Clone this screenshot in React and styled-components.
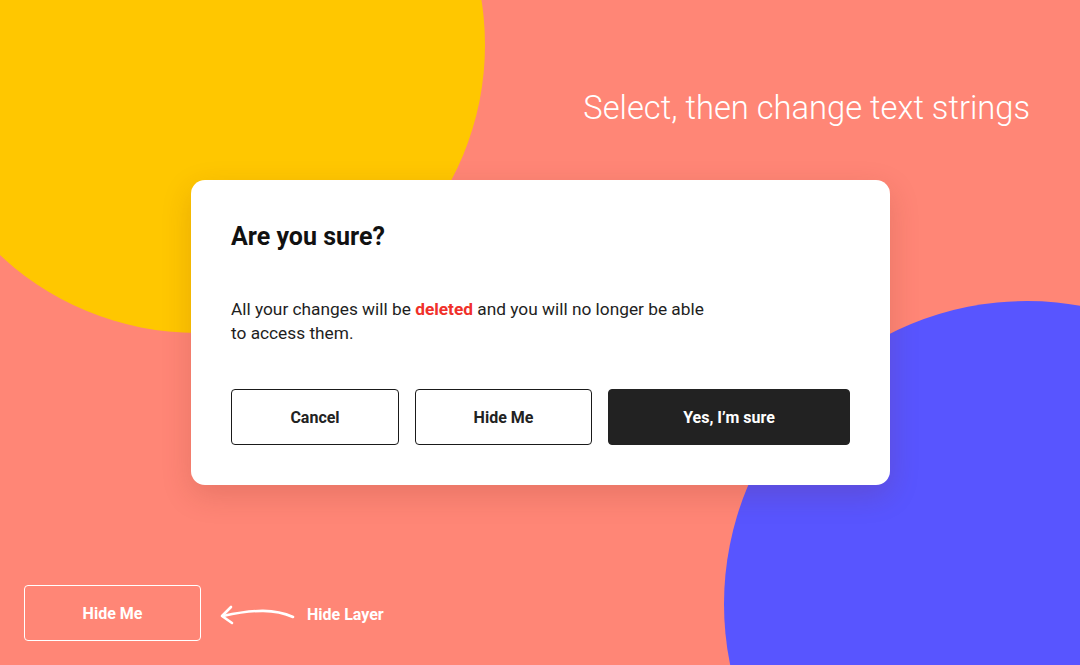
import styled, { createGlobalStyle } from "styled-components";

const GlobalStyle = createGlobalStyle`
    html, body {
        margin: 0;
        padding: 0;
    }
    body {
        font-family: Roboto, "Noto Sans", "Liberation Sans", sans-serif;
        background: #ff8676;
    }
`;

const Page = styled.div`
    position: relative;
    width: 1080px;
    height: 665px;
    overflow: hidden;
    background: #ff8676;
    display: flex;
    flex-direction: column;
`;

const Blob = styled.div`
    position: absolute;
    border-radius: 50%;
    width: ${p => p.$size}px;
    height: ${p => p.$size}px;
    left: ${p => p.$x - p.$size / 2}px;
    top: ${p => p.$y - p.$size / 2}px;
    background: ${p => p.$color};
    z-index: 0;
`;

const Layer = styled.div`
    position: relative;
    z-index: 1;
    display: flex;
    flex-direction: column;
    height: 100%;
`;

const Heading = styled.h2`
    margin: 88px 50px 0 0;
    align-self: flex-end;
    font-size: 32.7px;
    line-height: 40px;
    font-weight: 300;
    color: #fff;
`;

const Card = styled.div`
    margin: 52px 0 0 191px;
    width: 699px;
    box-sizing: border-box;
    padding: 40px;
    background: #fff;
    border-radius: 14px;
    box-shadow: 0 10px 30px rgba(120, 40, 30, 0.18);
`;

const Title = styled.h1`
    margin: 0;
    font-size: 25px;
    line-height: 34px;
    font-weight: 700;
    color: #111;
`;

const Body = styled.p`
    margin: 43px 0 0;
    max-width: 490px;
    font-size: 17.3px;
    line-height: 24px;
    color: #1e1e1e;
`;

const Danger = styled.strong`
    color: #f0302a;
    font-weight: 700;
`;

const Actions = styled.div`
    display: flex;
    gap: 16px;
    margin-top: 44px;
`;

const Button = styled.button`
    width: ${p => p.$w}px;
    height: 56px;
    box-sizing: border-box;
    border-radius: 4px;
    border: 1px solid ${p => (p.$dark ? "#222" : "#1a1a1a")};
    background: ${p => (p.$dark ? "#222" : "#fff")};
    color: ${p => (p.$dark ? "#fff" : "#222")};
    font-family: inherit;
    font-size: 16px;
    font-weight: 700;
    cursor: pointer;
`;

const Footer = styled.div`
    margin: 100px 0 0 24px;
    display: flex;
    align-items: center;
`;

const GhostButton = styled.button`
    width: 177px;
    height: 56px;
    box-sizing: border-box;
    border: 1px solid #fff;
    border-radius: 4px;
    background: transparent;
    color: #fff;
    font-family: inherit;
    font-size: 16px;
    font-weight: 700;
`;

const Arrow = styled.svg`
    margin-left: 16px;
    margin-top: 2px;
    width: 80px;
    height: 30px;
`;

const Note = styled.span`
    margin-left: 10px;
    margin-top: 3px;
    color: #fff;
    font-size: 16px;
    font-weight: 700;
`;

export default function App() {
    return (
        <Page>
            <GlobalStyle />
            <Blob $color="#ffc700" $size={576} $x={197} $y={45} />
            <Blob $color="#5855ff" $size={606} $x={1027} $y={604} />
            <Layer>
                <Heading>Select, then change text strings</Heading>
                <Card>
                    <Title>Are you sure?</Title>
                    <Body>
                        All your changes will be <Danger>deleted</Danger> and you will no longer be able to access them.
                    </Body>
                    <Actions>
                        <Button $w={168}>Cancel</Button>
                        <Button $w={177}>Hide Me</Button>
                        <Button $w={242} $dark>Yes, I’m sure</Button>
                    </Actions>
                </Card>
                <Footer>
                    <GhostButton>Hide Me</GhostButton>
                    <Arrow viewBox="0 0 80 30" fill="none" stroke="#fff" strokeWidth="2.6" strokeLinecap="round" strokeLinejoin="round">
                        <path d="M76 18 C58 10 38 10 6 17" />
                        <path d="M14 8 L5 17 L15 24" />
                    </Arrow>
                    <Note>Hide Layer</Note>
                </Footer>
            </Layer>
        </Page>
    );
}
